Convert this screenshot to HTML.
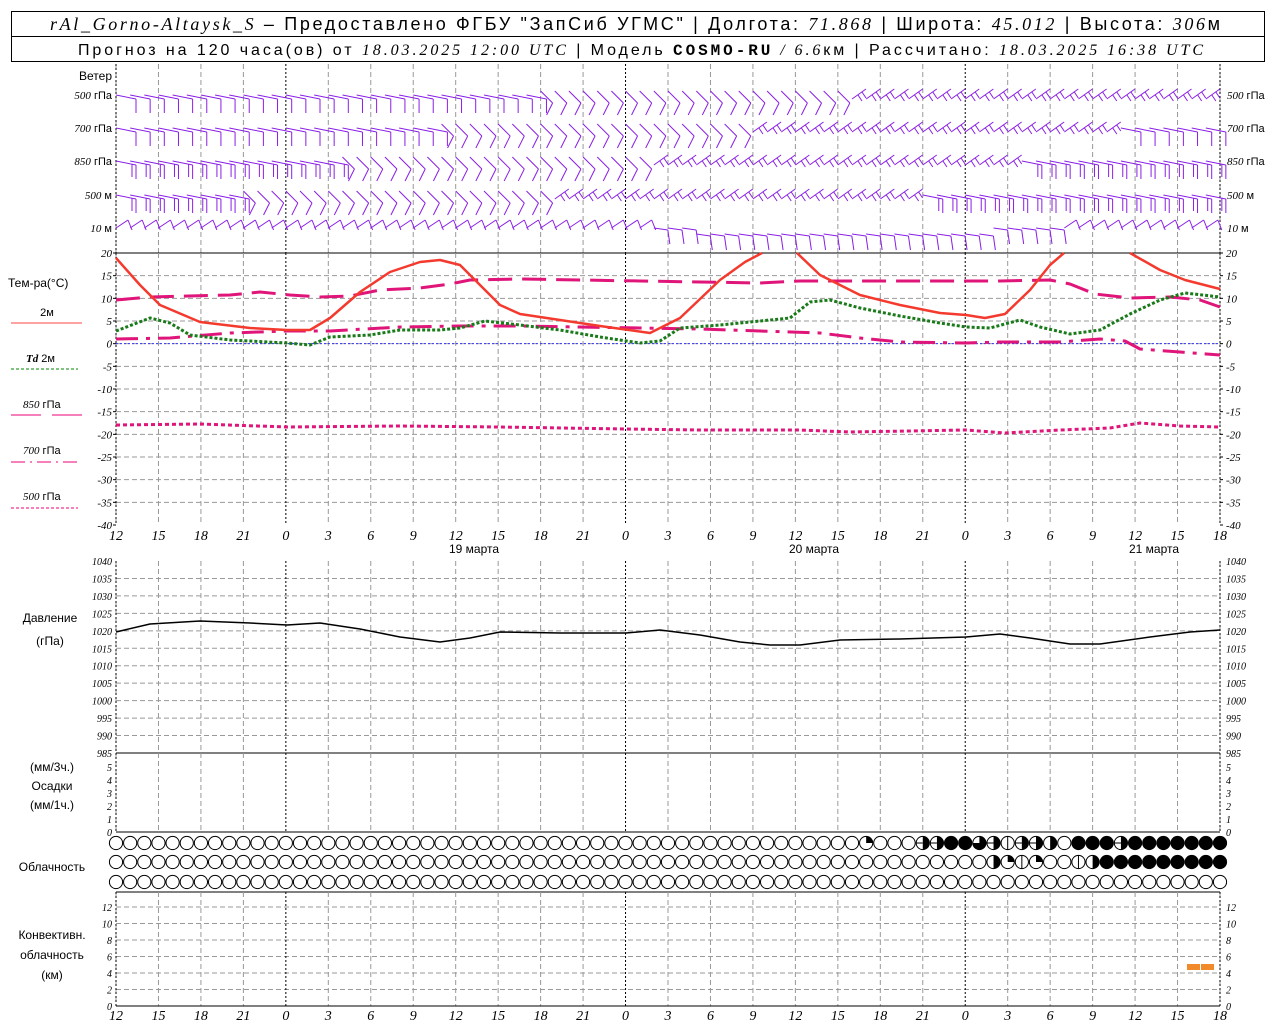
<!DOCTYPE html>
<html><head><meta charset="utf-8"><style>
html,body{margin:0;padding:0;background:#fff;width:1280px;height:1024px;overflow:hidden}
svg{display:block}
.t{font-family:"Liberation Sans",sans-serif;fill:#000}
.i{font-family:"Liberation Serif",serif;font-style:italic;fill:#000}
</style></head><body>
<svg id="s" width="1280" height="1024" xmlns="http://www.w3.org/2000/svg">
<rect x="11.5" y="11.5" width="1253" height="50" fill="none" stroke="#000"/>
<line x1="11" y1="36.5" x2="1265" y2="36.5" stroke="#000"/>
<text x="50" y="30" font-size="18" textLength="1170" lengthAdjust="spacing"><tspan class="i">rAl_Gorno-Altaysk_S</tspan><tspan class="t"> – Предоставлено ФГБУ "ЗапСиб УГМС" | Долгота: </tspan><tspan class="i">71.868</tspan><tspan class="t"> | Широта: </tspan><tspan class="i">45.012</tspan><tspan class="t"> | Высота: </tspan><tspan class="i">306</tspan><tspan class="t">м</tspan></text>
<text x="78" y="55" font-size="16" textLength="1125" lengthAdjust="spacing"><tspan class="t">Прогноз на 120 часа(ов) от </tspan><tspan class="i">18.03.2025 12:00 UTC</tspan><tspan class="t">  | Модель </tspan><tspan style="font-family:'Liberation Mono',monospace;font-weight:bold">COSMO-RU</tspan><tspan class="i"> / 6.6</tspan><tspan class="t">км | Рассчитано: </tspan><tspan class="i">18.03.2025 16:38 UTC</tspan></text>
<g id="g"></g>
</svg>
<script>
const G=document.getElementById('g');let h='';
const X0=116,X1=1220,dx=(X1-X0)/78;
const X=i=>X0+i*dx;
function L(x1,y1,x2,y2,c,w,da){h+=`<line x1="${x1}" y1="${y1}" x2="${x2}" y2="${y2}" stroke="${c}" stroke-width="${w||1}"${da?` stroke-dasharray="${da}"`:''}/>`}
function T(x,y,s,cls,sz,anc){h+=`<text x="${x}" y="${y}" class="${cls}" font-size="${sz}"${anc?` text-anchor="${anc}"`:''}>${s}</text>`}
function P(pts,c,w,da){h+=`<polyline fill="none" stroke="${c}" stroke-width="${w}" ${da?`stroke-dasharray="${da}"`:''} stroke-linejoin="round" points="${pts.map(p=>p.join(',')).join(' ')}"/>`}
function vgrid(y1,y2){for(let i=0;i<=26;i++){let x=X(i*3);let mid=(i%8==4);L(x,y1,x,y2,mid?'#000':'#999',1,mid?'2,2':'5,3')}
 L(X0,y1,X0,y2,'#000',1,'2,2');L(X1,y1,X1,y2,'#000',1,'2,2');}
function hgrid(ys){ys.forEach(y=>L(X0,y,X1,y,'#999',1,'5,3'))}
vgrid(64,253);
T(112,80,'Ветер','t',12,'end');
const wl=[[95,'500','гПа'],[128,'700','гПа'],[161,'850','гПа'],[195,'500','м'],[228,'10','м']];
wl.forEach(([y,a,b])=>{h+=`<text x="112" y="${y+4}" font-size="11" text-anchor="end"><tspan class="i">${a}</tspan><tspan class="t"> ${b}</tspan></text>`;
 h+=`<text x="1227" y="${y+4}" font-size="11"><tspan class="i">${a}</tspan><tspan class="t"> ${b}</tspan></text>`;});
const PU='#8a1ee6';
wl.forEach(([y],k)=>{for(let i=0;i<78;i++){let x=X(i);
 if(k==4){let yy=y+(i>40&&i<62?6:0);
  if(i<38||i>66){L(x,yy,x+12,yy-8,PU);L(x+12,yy-8,x+16,yy+2,PU);}else{L(x,yy,x+14,yy+2,PU);L(x+14,yy+2,x+16,yy+16,PU);}continue;}
 let ph=(i+k*7)%78;
 if(ph<30){L(x,y,x+20,y+4,PU);L(x+20,y+4,x+20,y+18,PU);if(k>=2)L(x+16,y+3,x+16,y+16,PU);}
 else if(ph<52){L(x,y-4,x+12,y+8,PU);L(x+12,y+8,x+6,y+20,PU);}
 else{L(x,y+4,x+14,y-6,PU);L(x+6,y,x+10,y+6,PU);L(x+10,y-3,x+14,y+3,PU);}
}});
const TY=v=>253+(20-v)*272/60;
L(X0,253,X1,253,'#000',1);
let ys=[];for(let v=15;v>=-35;v-=5)ys.push(TY(v));hgrid(ys);vgrid(253,525);
for(let v=20;v>=-40;v-=5){T(112,TY(v)+4,v,'i',11,'end');T(1226,TY(v)+4,v,'i',11);L(X0-3,TY(v),X0,TY(v),'#000');L(X1,TY(v),X1+3,TY(v),'#000');}
L(X0,TY(0),X1,TY(0),'#33f',1,'2,2');
const hrs=[12,15,18,21,0,3,6,9];
for(let i=0;i<=26;i++){let lab=hrs[i%8];T(X(i*3),540,lab,'i',14,'middle');T(X(i*3),1020,lab,'i',14,'middle');}
T(474,553,'19 марта','t',12,'middle');T(814,553,'20 марта','t',12,'middle');T(1154,553,'21 марта','t',12,'middle');
T(8,287,'Тем-ра(°С)','t',12);
T(47,316,'2м','t',11,'middle');L(11,323,82,323,'#f44',1);
h+=`<text x="26" y="362" font-size="11"><tspan class="i" font-weight="bold">Td</tspan><tspan class="t">  2м</tspan></text>`;L(11,369,78,369,'#080',1,'3,2');
h+=`<text x="23" y="408" font-size="11"><tspan class="i">850</tspan><tspan class="t"> гПа</tspan></text>`;L(11,415,41,415,'#e07',1);L(52,415,82,415,'#e07',1);
h+=`<text x="23" y="454" font-size="11"><tspan class="i">700</tspan><tspan class="t"> гПа</tspan></text>`;L(11,462,78,462,'#e07',1,'14,5,2,5');
h+=`<text x="23" y="500" font-size="11"><tspan class="i">500</tspan><tspan class="t"> гПа</tspan></text>`;L(11,508,78,508,'#e07',1,'3,2');
P([[116,425],[200,424],[287,427],[400,426],[500,427],[626,429],[700,430],[800,430],[850,432],[966,430],[1005,433],[1060,430],[1110,428],[1140,423],[1180,426],[1220,427]],'#e0157a',3,'4,3');
P([[116,339],[170,338],[230,333],[287,331],[330,331],[400,327],[460,326],[520,326],[580,327],[640,328],[700,329],[760,331],[820,333],[860,338],[900,342],[966,343],[1000,342],[1060,342],[1100,339],[1125,341],[1140,349],[1180,352],[1220,355]],'#e0157a',3,'22,8,4,8');
P([[116,300],[150,297],[230,295],[260,292],[290,295],[320,297],[350,296],[380,290],[420,288],[450,284],[470,280],[520,279],[580,280],[640,281],[700,282],[760,283],[800,281],[860,281],[960,281],[1000,281],[1050,280],[1070,284],[1095,294],[1130,298],[1170,297],[1200,300],[1220,307]],'#e0157a',3,'24,10');
P([[116,331],[150,318],[170,323],[190,335],[230,340],[287,343],[310,345],[330,337],[370,335],[400,330],[440,330],[460,328],[485,321],[520,325],[560,330],[600,337],[640,343],[660,341],[680,328],[720,325],[760,321],[790,318],[810,302],[830,300],[860,308],[900,316],[940,323],[966,327],[990,328],[1020,320],[1040,327],[1070,334],[1100,330],[1130,314],[1160,300],[1185,293],[1220,297]],'#187a18',3,'3,2');
const R='#f43a2e';
P([[116,258],[140,285],[160,305],[200,322],[250,328],[287,330],[310,330],[330,318],[360,292],[390,272],[420,262],[440,260],[460,265],[480,285],[500,305],[520,314],[560,320],[600,326],[650,333],[680,318],[720,280],[745,262],[762,253]],R,2.5);
P([[797,253],[820,275],[860,295],[900,305],[940,313],[966,315],[985,318],[1005,314],[1030,290],[1050,265],[1064,253]],R,2.5);
P([[1130,253],[1160,270],[1185,280],[1220,289]],R,2.5);
const PY=v=>561+(1040-v)*192/55;
ys=[];for(let v=1035;v>=990;v-=5)ys.push(PY(v));hgrid(ys);vgrid(561,753);
for(let v=1040;v>=985;v-=5){T(112,PY(v)+4,v,'i',10,'end');T(1226,PY(v)+4,v,'i',10);}
T(50,622,'Давление','t',12,'middle');T(50,645,'(гПа)','t',12,'middle');
P([[116,632],[150,624],[200,621],[250,623],[287,625],[320,623],[360,629],[400,637],[440,642],[470,638],[500,632],[560,633],[626,633],[660,630],[700,635],[740,642],[770,645],[800,645],[840,640],[900,639],[966,637],[1000,634],[1030,638],[1070,644],[1100,644],[1150,637],[1190,632],[1220,630]],'#000',1.5);
L(X0,753,X1,753,'#000',1);
vgrid(753,832);
for(let v=0;v<=5;v++){let y=832-v*13;T(112,y+4,v,'i',10,'end');T(1226,y+4,v,'i',10);}
T(52,771,'(мм/3ч.)','t',12,'middle');T(52,790,'Осадки','t',12,'middle');T(52,809,'(мм/1ч.)','t',12,'middle');
L(X0,832,X1,832,'#000',1);
T(52,871,'Облачность','t',12,'middle');
function cl(x,y,t){const r=6.6;h+=`<circle cx="${x}" cy="${y}" r="${r}" fill="${t=='f'?'#000':'#fff'}" stroke="#000"/>`;
 if(t=='h')h+=`<path d="M${x},${y-r}A${r},${r} 0 0 1 ${x},${y+r}Z" fill="#000"/>`;
 if(t=='q')h+=`<path d="M${x},${y}L${x},${y-r}A${r},${r} 0 0 1 ${x+r},${y}Z" fill="#000"/>`;
 if(t=='t')h+=`<path d="M${x},${y-r}A${r},${r} 0 1 1 ${x-r},${y}L${x},${y}Z" fill="#000"/>`;
 if(t=='l')L(x,y-r,x,y+r,'#000');
 if(t=='p'){h+=`<path d="M${x},${y-r}A${r},${r} 0 0 1 ${x},${y+r}Z" fill="#000"/>`;L(x-r,y,x,y,'#000');}}
const r1={53:'q',57:'p',58:'p',59:'f',60:'f',61:'t',62:'p',63:'l',64:'p',65:'p',66:'h',68:'f',69:'f',70:'f',71:'p'};
const r2={62:'h',63:'q',64:'l',65:'q',68:'l',69:'h'};
for(let i=0;i<79;i++){let x=X(i);cl(x,843,r1[i]||(i>=72?'f':'e'));cl(x,862,r2[i]||(i>=70?'f':'e'));cl(x,882,'e');}
const CY=v=>1006-v*8.25;
L(X0,892,X1,892,'#000',1);
ys=[];for(let v=2;v<=12;v+=2)ys.push(CY(v));hgrid(ys);vgrid(892,1006);
for(let v=0;v<=12;v+=2){T(1226,CY(v)+4,v,'i',10);T(112,CY(v)+4,v,'i',10,'end');}
T(52,939,'Конвективн.','t',12,'middle');T(52,959,'облачность','t',12,'middle');T(52,979,'(км)','t',12,'middle');
L(X0,1006,X1,1006,'#000',1);
h+=`<rect x="1187" y="964" width="13" height="6" fill="#f08a2a"/><rect x="1201" y="964" width="13" height="6" fill="#f08a2a"/>`;
G.innerHTML=h;
</script>
</body></html>
